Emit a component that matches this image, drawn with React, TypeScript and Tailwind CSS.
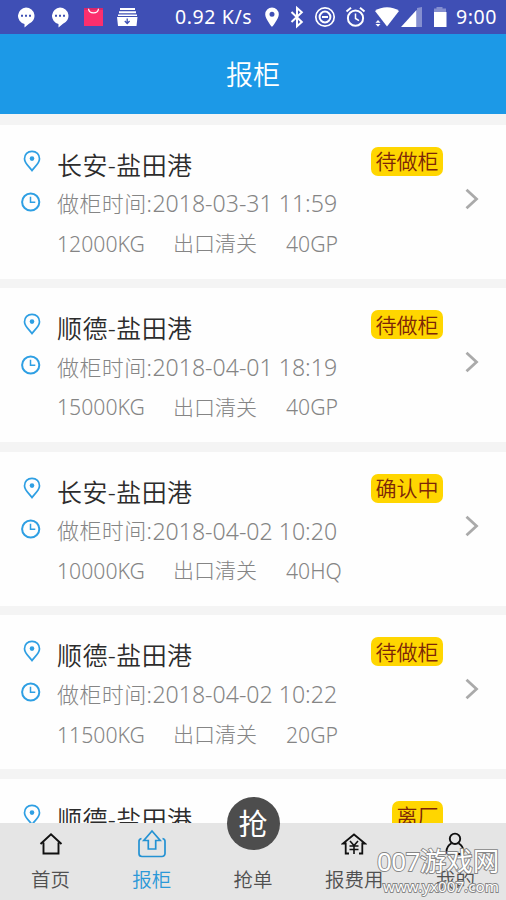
import React from "react";

type Order = {
  route: string;
  time: string;
  weight: string;
  box: string;
  status: string;
};

const orders: Order[] = [
  { route: "长安-盐田港", time: "2018-03-31 11:59", weight: "12000KG", box: "40GP", status: "待做柜" },
  { route: "顺德-盐田港", time: "2018-04-01 18:19", weight: "15000KG", box: "40GP", status: "待做柜" },
  { route: "长安-盐田港", time: "2018-04-02 10:20", weight: "10000KG", box: "40HQ", status: "确认中" },
  { route: "顺德-盐田港", time: "2018-04-02 10:22", weight: "11500KG", box: "20GP", status: "待做柜" },
];

const lastOrder = { route: "顺德-盐田港", status: "离厂" };

function ChatIcon() {
  return (
    <svg width="18" height="21" viewBox="0 0 18 21">
      <path d="M9 0.5a8.7 8.4 0 0 1 3 16.2L7.5 20.500V17A8.700 8.400 0 0 1 9 0.500z" fill="#fff" />
      <path d="M4 8.700h2M8 8.700h2M12 8.700h2" stroke="#3f51b5" strokeWidth="2" />
    </svg>
  );
}

function StatusBar() {
  return (
    <div className="flex h-[34px] shrink-0 items-center bg-[#3f4fb5] font-normal text-white">
      <div className="flex w-[175px] shrink-0 items-center pl-[17px]">
        <ChatIcon />
        <span className="w-4" />
        <ChatIcon />
        <svg className="ml-[15px]" width="19" height="19" viewBox="0 0 19 19">
          <path d="M0 0h19v18H0z" fill="#fb2f6d" />
          <path d="M0 0h19v2H0z" fill="#d9276a" />
          <path d="M4.500 .8c.5 5.500 9.500 5.500 10 0" fill="none" stroke="#fff" strokeWidth="1.200" />
        </svg>
        <svg className="ml-[14px]" width="21" height="19" viewBox="0 0 21 19">
          <path d="M3 0h15v2H3zM2 3.200h17v2H2zM1 6.500h19v1.500H1zM0 9h20.500l-1 9H1z" fill="#fff" />
          <path d="M10.200 10.500v5M7.800 13l2.400 2.500 2.400-2.500" fill="none" stroke="#3f51b5" strokeWidth="1.300" />
        </svg>
      </div>
      <span className="w-[88px] shrink-0 text-[19.500px] leading-[34px] tracking-[0.6px] whitespace-nowrap">0.92 K/s</span>
      <svg className="shrink-0" width="190" height="34" viewBox="263 0 190 34" fill="none" stroke="#fff">
        <path d="M272 7.500a6.800 6.800 0 0 0-6.800 6.800c0 4.700 6.800 12.700 6.800 12.700s6.800-8 6.800-12.700A6.800 6.800 0 0 0 272 7.500zm0 4.300a2.500 2.500 0 1 1 0 5 2.500 2.500 0 0 1 0-5z" fill="#fff" stroke="none" />
        <path d="M291.500 12l10.300 10-4.800 4.300V8l4.800 4.300-10.300 9.700" strokeWidth="2" />
        <circle cx="325" cy="17" r="9.200" strokeWidth="1.700" />
        <circle cx="325" cy="17" r="5.400" strokeWidth="2" />
        <path d="M322 17h6" strokeWidth="2" />
        <circle cx="355.500" cy="18.200" r="7.600" strokeWidth="2" />
        <path d="M355.500 13.500v5l3.500 2.200" strokeWidth="1.500" />
        <path d="M346.500 11.500l4.500-3.700M364.500 11.500l-4.500-3.700" strokeWidth="2" />
        <path d="M375 11c6.500-5 17.500-5 24 0l-12 15.500z" fill="#fff" stroke="none" />
        <path d="M375.500 22.800l2.500-2.800 2.500 2.800zM375.500 24l2.500 2.800 2.500-2.800z" fill="#fff" stroke="none" />
        <path d="M417 27V8l5-1v20z" fill="#858fd0" stroke="none" />
        <path d="M401 27l15.500-17v17z" fill="#fff" stroke="none" />
        <path d="M434 12V8.500h2.500v-1.500h6v1.500h3.500V12z" fill="#858fd0" stroke="none" />
        <path d="M434 12h12.500v15H434z" fill="#fff" stroke="none" />
      </svg>
      <span className="pl-[3px] text-[19.500px] leading-[34px] tracking-[0.6px] whitespace-nowrap">9:00</span>
    </div>
  );
}

function PinIcon() {
  return (
    <svg width="18" height="22" viewBox="0 0 18 22" fill="none" stroke="#2e9fe3">
      <path d="M9 1.300c-4.400 0-7.500 3.200-7.500 7.400 0 4.600 4.700 7.900 7.500 11.800 2.800-3.900 7.500-7.200 7.500-11.800 0-4.200-3.100-7.400-7.500-7.400z" strokeWidth="1.700" />
      <circle cx="9" cy="8.600" r="2.300" fill="#2e9fe3" stroke="none" />
    </svg>
  );
}

function ClockIcon() {
  return (
    <svg width="20" height="20" viewBox="0 0 20 20" fill="none" stroke="#2e9fe3">
      <circle cx="9.700" cy="10" r="8.600" strokeWidth="2" />
      <path d="M9.500 4.800v5.400h4.800" strokeWidth="1.500" />
    </svg>
  );
}

function RouteLine({ route, status }: { route: string; status: string }) {
  return (
    <div className="flex h-[36px] items-start justify-between">
      <h2 className="text-[25px] leading-[37px] font-[350] tracking-[0.4px] text-[#2c2c2c]">{route}</h2>
      <span className="flex h-[29px] items-center rounded-[7px] bg-[#ffd600] px-[4.500px] text-[21px] leading-[28px] font-[350] text-[#7c2508]">
        {status}
      </span>
    </div>
  );
}

function OrderCard({ order }: { order: Order }) {
  return (
    <article className="flex h-[154px] shrink-0 bg-[#fefefe]">
      <div className="flex w-[57px] shrink-0 flex-col pt-[25px]">
        <div className="flex pl-[23px]"><PinIcon /></div>
        <div className="mt-[20px] flex pl-[21px]"><ClockIcon /></div>
      </div>
      <div className="flex flex-1 flex-col pt-[22px]">
        <RouteLine route={order.route} status={order.status} />
        <div className="mt-[4px] flex h-[34px] items-center text-[#858585]">
          <span className="text-[22px] tracking-[0.4px]">做柜时间:</span>
          <span className="text-[23.100px] whitespace-nowrap">{order.time}</span>
        </div>
        <div className="mt-[7px] flex h-[32px] items-center text-[21.200px] text-[#858585]">
          <span className="w-[116px]">{order.weight}</span>
          <span className="w-[113px] text-[21px]">出口清关</span>
          <span>{order.box}</span>
        </div>
      </div>
      <div className="flex w-[63px] shrink-0 justify-end pt-[63px] pr-[27px]">
        <svg width="14" height="22" viewBox="0 0 14 22" fill="none" stroke="#aaa" strokeWidth="2.800">
          <path d="M1.500 1.800L11.500 11 1.500 20.200" />
        </svg>
      </div>
    </article>
  );
}

function HomeIcon() {
  return (
    <svg width="24" height="24" viewBox="0 0 24 24" fill="none" stroke="#111" strokeWidth="1.900">
      <path d="M1.500 12L12 2.200 22.500 12M4.500 10.500v11h15v-11" />
    </svg>
  );
}

function UploadBoxIcon() {
  return (
    <svg width="30" height="30" viewBox="0 0 30 30" fill="none" stroke="#2492d3" strokeWidth="1.700">
      <path d="M4.500 9.500A3 3 0 0 0 2 12.500v12a3 3 0 0 0 3 3h20a3 3 0 0 0 3-3v-12a3 3 0 0 0-2.500-3" />
      <path d="M15 2L6.800 11.500h4.500v8.500h7.400v-8.500h4.500z" />
    </svg>
  );
}

function FeeIcon() {
  return (
    <svg width="26" height="24" viewBox="0 0 26 24" fill="none" stroke="#111" strokeWidth="1.800">
      <path d="M8 21.500H4.700V11.500H2L13 2.500l11 9h-2.700v10H18" />
      <path d="M9 9l4 4.500 4-4.500M13 13v9M8.500 14h9M8.500 17.500h9" strokeWidth="1.600" />
    </svg>
  );
}

function UserIcon() {
  return (
    <svg width="22" height="24" viewBox="0 0 22 24" fill="none" stroke="#111" strokeWidth="1.900">
      <circle cx="11" cy="6.800" r="5.200" />
      <path d="M7.500 11.200C4.500 13 2.500 16.500 2.500 19.500c0 2 1 2.500 3 2.500h11c2 0 3-.5 3-2.500 0-3-2-6.500-5-8.300" />
    </svg>
  );
}

function Tab({ label, active, children }: { label: string; active?: boolean; children?: React.ReactNode }) {
  return (
    <div className={active ? "flex flex-1 flex-col items-center text-[#2b98d8]" : "flex flex-1 flex-col items-center text-[#505050]"}>
      <div className="flex h-[43px] items-center justify-center">{children}</div>
      <span className="text-[19.500px] leading-[28px]">{label}</span>
    </div>
  );
}

export default function App() {
  return (
    <div className="relative flex h-[900px] w-[506px] flex-col overflow-hidden bg-[#f4f4f4] font-['Noto_Sans','Noto_Sans_CJK_SC',sans-serif] font-light">
      <StatusBar />
      <header className="flex h-[80px] shrink-0 items-center justify-center bg-[#1c99e7] pt-[3px] text-[27px] font-[350] text-white">
        报柜
      </header>
      <main className="flex h-[708.500px] shrink-0 flex-col gap-[9.600px] overflow-hidden pt-[10.700px]">
        {orders.map((order, i) => (
          <OrderCard key={i} order={order} />
        ))}
        <article className="flex h-[154px] shrink-0 bg-[#fefefe]">
          <div className="w-[57px] shrink-0 pt-[25px] pl-[23px]"><PinIcon /></div>
          <div className="flex-1 pt-[22px] pr-[63px]">
            <RouteLine route={lastOrder.route} status={lastOrder.status} />
          </div>
        </article>
      </main>
      <nav className="flex flex-1 bg-[#e5e5e5] font-[350]">
        <Tab label="首页"><HomeIcon /></Tab>
        <Tab label="报柜" active><UploadBoxIcon /></Tab>
        <Tab label="抢单">
          <span className="relative -top-[21px] flex size-[53px] shrink-0 items-center justify-center rounded-full bg-[#4d4d4d] text-[29px] leading-none font-normal text-white">
            抢
          </span>
        </Tab>
        <Tab label="报费用"><FeeIcon /></Tab>
        <Tab label="我的"><UserIcon /></Tab>
      </nav>
      <div className="absolute top-[844px] left-[377px] flex flex-col whitespace-nowrap text-white">
        <span className="flex items-center leading-[34px] font-normal [-webkit-text-stroke:1.800px_#858585] [paint-order:stroke_fill]">
          <span className="text-[26px] tracking-[-0.6px]">007</span>
          <span className="text-[26.500px]">游戏网</span>
        </span>
        <span className="pl-[6px] text-[15.200px] leading-[17px] font-normal [-webkit-text-stroke:1.800px_#858585] [paint-order:stroke_fill]">www.yx007.com</span>
      </div>
    </div>
  );
}
